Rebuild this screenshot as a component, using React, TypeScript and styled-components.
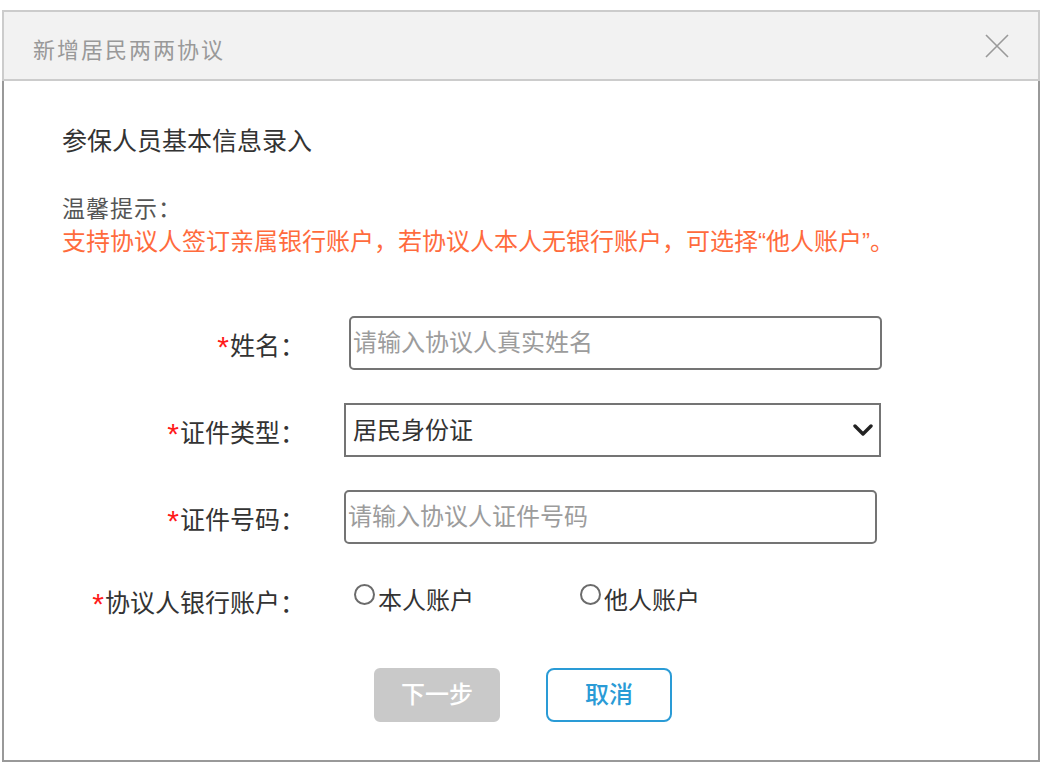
import React from 'react'
import styled, { createGlobalStyle } from 'styled-components'

const GlobalStyle = createGlobalStyle`
	html, body {
		margin: 0;
		padding: 0;
		background: #ffffff;
	}
	body {
		font-family: "Liberation Sans", "Noto Sans CJK SC", sans-serif;
		color: #333333;
	}
`

type Field = {
	label: string
}

const ChevronDown = () => (
	<svg width="20" height="12" viewBox="0 0 20 12" fill="none">
		<path d="M2 2 L10 10 L18 2" stroke="#222222" strokeWidth="3.4" strokeLinecap="round" strokeLinejoin="round" />
	</svg>
)

const CloseIcon = () => (
	<svg width="24" height="24" viewBox="0 0 24 24" fill="none">
		<path d="M1 1 L23 23 M23 1 L1 23" stroke="#9a9a9a" strokeWidth="1.6" />
	</svg>
)

const Label = ({ label }: Field) => (
	<LabelText>
		<Star>*</Star>
		{label}：
	</LabelText>
)

export default function App() {
	return (
		<>
			<GlobalStyle />
			<Page>
				<Dialog>
					<Header>
						<Title>新增居民两两协议</Title>
						<CloseButton aria-label="关闭">
							<CloseIcon />
						</CloseButton>
					</Header>
					<Body>
						<SectionTitle>参保人员基本信息录入</SectionTitle>
						<TipTitle>温馨提示：</TipTitle>
						<TipText>支持协议人签订亲属银行账户，若协议人本人无银行账户，可选择“他人账户”。</TipText>

						<Form>
							<Row>
								<Label label="姓名" />
								<TextInput $offset={5} $rounded placeholder="请输入协议人真实姓名" />
							</Row>
							<Row>
								<Label label="证件类型" />
								<SelectWrap>
									<Select defaultValue="id">
										<option value="id">居民身份证</option>
										<option value="hk">港澳居民来往内地通行证</option>
										<option value="tw">台湾居民来往大陆通行证</option>
									</Select>
									<Chevron>
										<ChevronDown />
									</Chevron>
								</SelectWrap>
							</Row>
							<Row>
								<Label label="证件号码" />
								<TextInput $offset={0} $rounded placeholder="请输入协议人证件号码" />
							</Row>
							<RadioRow>
								<Label label="协议人银行账户" />
								<RadioGroup>
									<RadioOption $width={226}>
										<RadioCircle type="radio" name="account" />
										<RadioText>本人账户</RadioText>
									</RadioOption>
									<RadioOption>
										<RadioCircle type="radio" name="account" />
										<RadioText>他人账户</RadioText>
									</RadioOption>
								</RadioGroup>
							</RadioRow>
						</Form>

						<Actions>
							<Button $variant="disabled" disabled>下一步</Button>
							<Button $variant="outline">取消</Button>
						</Actions>
					</Body>
				</Dialog>
			</Page>
		</>
	)
}

const Page = styled.div`
	padding: 10px 4px 4px 2px;
`

const Dialog = styled.div`
	width: 1038px;
	display: flex;
	flex-direction: column;
`

const Header = styled.div`
	box-sizing: border-box;
	height: 71px;
	display: flex;
	align-items: center;
	justify-content: space-between;
	padding: 4px 29px 0 29px;
	background: #f2f2f2;
	border: 2px solid #cccccc;
`

const Title = styled.div`
	font-size: 22px;
	letter-spacing: 2px;
	color: #999999;
`

const CloseButton = styled.button`
	display: flex;
	padding: 0;
	border: none;
	background: none;
	cursor: pointer;
	margin-top: -4px;
`

const Body = styled.div`
	box-sizing: border-box;
	height: 681px;
	display: flex;
	flex-direction: column;
	padding: 44px 0 0 58px;
	border: 2px solid #999999;
	border-top: none;
`

const SectionTitle = styled.div`
	font-size: 25px;
	line-height: 32px;
	color: #333333;
`

const TipTitle = styled.div`
	margin-top: 36px;
	font-size: 23px;
	line-height: 32px;
	letter-spacing: 1px;
	color: #555555;
`

const TipText = styled.div`
	margin-top: 1px;
	font-size: 24px;
	line-height: 32px;
	color: #ff6b3d;
`

const Form = styled.div`
	display: flex;
	flex-direction: column;
	row-gap: 33px;
	margin: 58px 0 0 -58px;
`

const Row = styled.div`
	display: grid;
	grid-template-columns: 301px 1fr;
	column-gap: 39px;
	align-items: center;
	height: 54px;
`

const RadioRow = styled(Row)`
	height: 46px;
`

const LabelText = styled.div`
	text-align: right;
	font-size: 25px;
	line-height: 32px;
	color: #333333;
	padding-top: 6px;
`

const Star = styled.span`
	display: inline-block;
	font-size: 30px;
	line-height: 20px;
	color: #ff1a1a;
	margin-right: 1px;
	vertical-align: -2px;
`

const TextInput = styled.input<{ $offset: number; $rounded?: boolean }>`
	box-sizing: border-box;
	width: 533px;
	height: 54px;
	margin-left: ${props => props.$offset}px;
	padding: 0 2px;
	font-family: inherit;
	font-size: 24px;
	color: #333333;
	background: #ffffff;
	border: 2px solid #747474;
	border-radius: ${props => (props.$rounded ? '5px' : '0')};
	outline: none;

	&::placeholder {
		color: #9c9c9c;
	}
`

const SelectWrap = styled.div`
	position: relative;
	width: 537px;
	height: 54px;
`

const Select = styled.select`
	box-sizing: border-box;
	width: 100%;
	height: 100%;
	padding: 0 40px 0 7px;
	font-family: inherit;
	font-size: 24px;
	color: #333333;
	background: #ffffff;
	border: 2px solid #747474;
	border-radius: 0;
	appearance: none;
	outline: none;
`

const Chevron = styled.span`
	position: absolute;
	right: 8px;
	top: 21px;
	display: flex;
	pointer-events: none;
`

const RadioGroup = styled.div`
	display: flex;
	align-items: center;
	padding-left: 10px;
`

const RadioOption = styled.label<{ $width?: number }>`
	display: flex;
	align-items: flex-start;
	width: ${props => (props.$width ? `${props.$width}px` : 'auto')};
	cursor: pointer;
`

const RadioCircle = styled.input`
	box-sizing: border-box;
	width: 21px;
	height: 21px;
	margin: 0 3px 0 0;
	border: 2px solid #6b6b6b;
	border-radius: 50%;
	background: #ffffff;
	appearance: none;

	&:checked {
		background: radial-gradient(circle, #2a9bd6 0 5px, #ffffff 6px);
	}
`

const RadioText = styled.span`
	font-size: 24px;
	line-height: 32px;
	color: #333333;
	margin-top: 1px;
`

const Actions = styled.div`
	display: flex;
	justify-content: center;
	column-gap: 46px;
	margin: 45px 0 0 -54px;
`

const Button = styled.button<{ $variant: 'disabled' | 'outline' }>`
	box-sizing: border-box;
	width: 126px;
	height: 54px;
	padding: 0 0 6px;
	font-family: inherit;
	font-size: 24px;
	font-weight: 500;
	border-radius: ${props => (props.$variant === 'outline' ? '8px' : '6px')};
	border: 2px solid ${props => (props.$variant === 'outline' ? '#2a9bd6' : '#c9c9c9')};
	background: ${props => (props.$variant === 'outline' ? '#ffffff' : '#c9c9c9')};
	color: ${props => (props.$variant === 'outline' ? '#2a9bd6' : '#ffffff')};
	cursor: ${props => (props.$variant === 'outline' ? 'pointer' : 'default')};
`
